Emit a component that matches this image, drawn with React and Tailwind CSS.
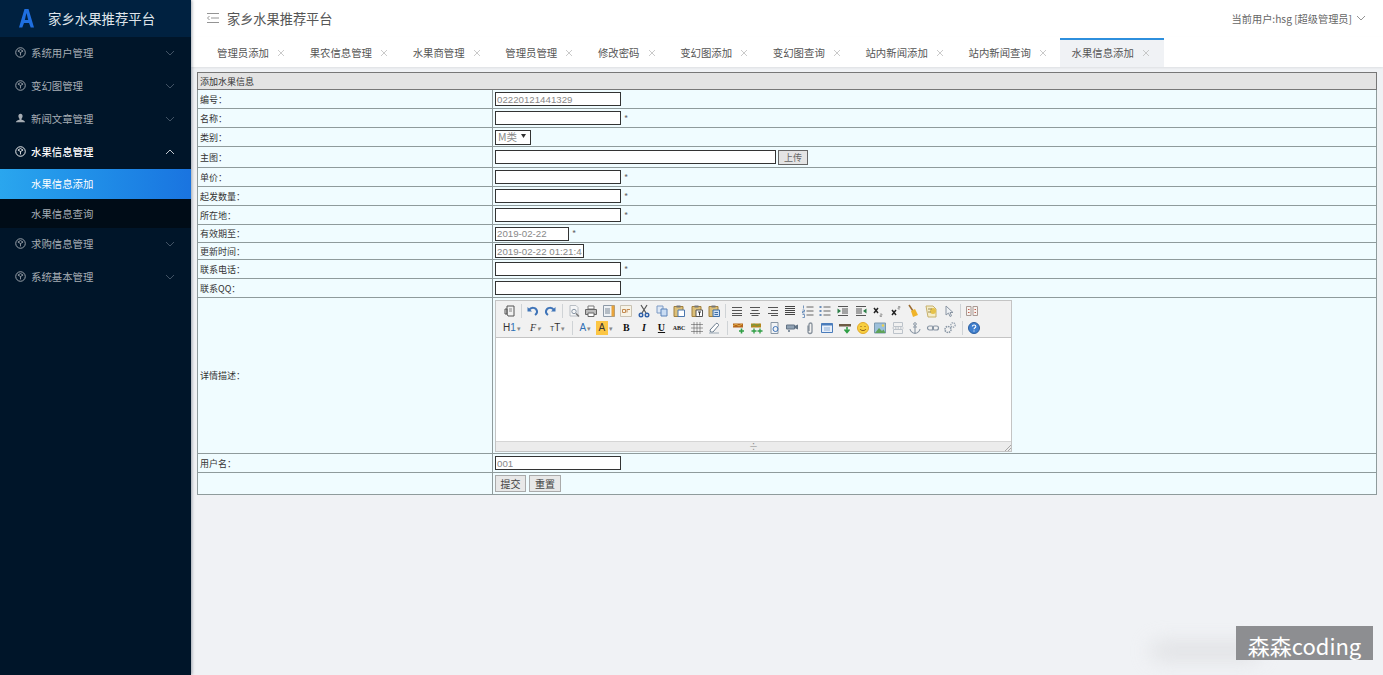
import React from "react";

const cjk = '"Noto Sans CJK SC","Liberation Sans",sans-serif';

function Cube({ c = "#a6adb4" }) {
  return (
    <svg width="11" height="11" viewBox="0 0 12 12" fill="none" stroke={c} strokeWidth="1" className="shrink-0">
      <circle cx="6" cy="6" r="5.2" />
      <path d="M3.200 4.400 6 2.800l2.800 1.600L6 6zM6 6v3.200" strokeWidth="0.9" />
    </svg>
  );
}
function UserI({ c = "#a6adb4" }) {
  return (
    <svg width="11" height="11" viewBox="0 0 12 12" fill={c} className="shrink-0">
      <path d="M6 .8c1.500 0 2.300 1.100 2.300 2.600 0 1.200-.6 2.300-1.200 2.900v1c1.300.5 3.700.9 3.900 2.700H.9c.3-1.800 2.600-2.200 4-2.700v-1c-.6-.6-1.200-1.700-1.200-2.900C3.700 1.900 4.500.8 6 .8z" />
    </svg>
  );
}
function Chev({ up, c = "#5f6f7f" }) {
  return (
    <svg width="10" height="6" viewBox="0 0 10 6" fill="none" stroke={c} strokeWidth="0.9">
      <path d={up ? "M1 5 5 1l4 4" : "M1 1l4 4 4-4"} />
    </svg>
  );
}
function Menu({ label, active, user }) {
  const c = active ? "#fff" : "#a6adb4";
  return (
    <div className={`h-[33px] flex items-center pb-[2px] pl-[15px] pr-[16px] ${active ? "text-white font-medium" : "text-[#a6adb4]"}`}>
      {user ? <UserI c={c} /> : <Cube c={c} />}
      <span className="ml-[5px] flex-1 text-[10.4px]">{label}</span>
      <Chev up={active} c={active ? "#d8dde2" : "#4a5a6c"} />
    </div>
  );
}

const tabs = ["管理员添加", "果农信息管理", "水果商管理", "管理员管理", "修改密码", "变幻图添加", "变幻图查询", "站内新闻添加", "站内新闻查询", "水果信息添加"];

function Tab({ label, active }) {
  return (
    <div className={`h-[29px] flex items-center pb-[2px] pl-[12px] text-[10.4px] border-t-2 ${active ? "border-[#2d8fdd] bg-[#f0f2f5] pr-[14px]" : "border-transparent pr-[12.7px]"}`}>
      <span className="text-[#555]">{label}</span>
      <svg width="8" height="8" viewBox="0 0 8 8" stroke="#bdbdbd" strokeWidth="0.8" className="ml-[8px]">
        <path d="M1 1l6 6M7 1 1 7" />
      </svg>
    </div>
  );
}

const S = ({ children }) => (
  <svg width="14" height="14" viewBox="0 0 14 14" fill="none" strokeWidth="1">{children}</svg>
);
const lines = (ys, x1 = 2, x2 = 12, c = "#555") => ys.map((y, i) => <path key={i} d={`M${x1} ${y}H${x2}`} stroke={c} />);

const I = {
  source: <S><path d="M4 2h7v10H5l-1-2zM2 5h2v5H2z" stroke="#555" /><path d="M6 5h3M6 7h3" stroke="#888" /></S>,
  undo: <S><path d="M3 6c2-3 7-3 8 1 .3 1.500-.5 3-2 4" stroke="#3f74b8" strokeWidth="2" /><path d="M1.500 3v4.500H6z" fill="#3f74b8" /></S>,
  redo: <S><path d="M11 6C9 3 4 3 3 7c-.3 1.500.5 3 2 4" stroke="#3f74b8" strokeWidth="2" /><path d="M12.500 3v4.500H8z" fill="#3f74b8" /></S>,
  preview: <S><path d="M3 1.500h6l2 2V12H3z" stroke="#b9bec4" fill="#f5f6f7" /><circle cx="7" cy="7.500" r="2.200" stroke="#8a97a6" /><path d="M9 9.500l3 3" stroke="#777" strokeWidth="1.500" /></S>,
  print: <S><path d="M4 2h6v3H4z" stroke="#777" fill="#fff" /><path d="M1.500 5.500h11v5h-11z" stroke="#666" fill="#bbb" /><path d="M4 9h6v3.500H4z" stroke="#666" fill="#fff" /></S>,
  tpl: <S><path d="M1.500 1.500h11v11h-11z" stroke="#8d99a6" fill="#eef2f6" /><path d="M9.500 1.500h3v11h-3z" fill="#e8a33a" /><path d="M3 5h5M3 7h5M3 9h5" stroke="#7a8794" /></S>,
  cf: <S><path d="M1.500 1.500h11v11h-11z" stroke="#c9c2b2" fill="#f7f3e6" /><path d="M3.500 5.500h3v3h-3zM8 5.500h3M8 5.500v3" stroke="#c48a50" /></S>,
  cut: <S><path d="M4 1l5 8M10 1 5 9" stroke="#555" strokeWidth="1.200" /><circle cx="4" cy="11" r="1.800" stroke="#2f5fa8" strokeWidth="1.400" /><circle cx="10" cy="11" r="1.800" stroke="#2f5fa8" strokeWidth="1.400" /></S>,
  copy: <S><path d="M2 2h6v7H2z" stroke="#7d9ac4" fill="#dfe9f6" /><path d="M6 5h6v7H6z" stroke="#5b82b8" fill="#c9dcf3" /></S>,
  paste: <S><path d="M2 2.500h9v10H2z" stroke="#a07f3d" fill="#dcbf78" /><path d="M4.500 1.500h4v2h-4z" fill="#777" /><path d="M6 6h6.500v6.500H6z" stroke="#4b76ad" fill="#fff" /></S>,
  paste2: <S><path d="M2 2.500h9v10H2z" stroke="#a07f3d" fill="#dcbf78" /><path d="M4.500 1.500h4v2h-4z" fill="#777" /><path d="M6 6h6.500v6.500H6z" stroke="#555" fill="#fff" /><path d="M8 8h3M9.500 8v3.500" stroke="#333" /></S>,
  paste3: <S><path d="M2 2.500h9v10H2z" stroke="#a07f3d" fill="#dcbf78" /><path d="M4.500 1.500h4v2h-4z" fill="#777" /><path d="M6 6h6.500v6.500H6z" stroke="#3c6ea8" fill="#cfe0f4" /><path d="M7.500 8.500h3.500M7.500 10.500h3.500" stroke="#3c6ea8" /></S>,
  al: <S>{lines([3.500, 6.500, 9.500, 11.500])}</S>,
  ac: <S>{lines([3.500, 9.500])}{lines([6.500, 11.500], 3.500, 10.500)}</S>,
  ar: <S>{lines([3.500, 9.500])}{lines([6.500, 11.500], 5, 12)}</S>,
  aj: <S>{lines([2.500, 4.500, 6.500, 8.500, 10.500], 2, 12, "#444")}</S>,
  ol: <S>{lines([3, 7, 11], 5.500, 12.500, "#666")}<path d="M2.500 1.500v3M1.500 6h2v1.500h-2V9h2M1.500 10.500h2v3h-2" stroke="#3f6ea8" strokeWidth="0.700" /></S>,
  ul: <S>{lines([3, 7, 11], 5.500, 12.500, "#666")}<path d="M1.500 3h2M1.500 7h2M1.500 11h2" stroke="#3f6ea8" strokeWidth="1.500" /></S>,
  ind: <S>{lines([2.500, 11.500], 2, 12)}{lines([5, 7, 9], 6, 12)}<path d="M1.500 4.500 5 7l-3.500 2.500z" fill="#2b7d46" /></S>,
  out: <S>{lines([2.500, 11.500], 2, 12)}{lines([5, 7, 9], 2, 8)}<path d="M12.500 4.500 9 7l3.500 2.500z" fill="#2b7d46" /></S>,
  sub: <S><path d="M3 4l4 5M7 4 3 9" stroke="#222" strokeWidth="1.500" /><path d="M9 10h2v1.200H9v1.300h2" stroke="#777" strokeWidth="0.600" /></S>,
  sup: <S><path d="M3 6l4 5M7 6l-4 5" stroke="#222" strokeWidth="1.500" /><path d="M9 2.500h2v1.200H9V5h2" stroke="#777" strokeWidth="0.600" /></S>,
  brush: <S><path d="M3 1l4 6" stroke="#9a6a2e" strokeWidth="1.500" /><path d="M5 7l4-2 3 6-5 2z" fill="#f0b429" /></S>,
  wizard: <S><path d="M2 2h7l3 3v8H4z" stroke="#c7b16c" fill="#f5edc8" /><circle cx="9" cy="7" r="3" fill="#e6c24a" /><path d="M4 5h4M4 8h3" stroke="#9a8c5c" /></S>,
  cursor: <S><path d="M4 2v9l2.500-2 1.500 3.500 1.500-.7L8 8.500h3z" stroke="#8a95a3" fill="#eef1f4" /></S>,
  full: <S><path d="M1.500 2.500h4.500v9H1.500zM8 2.500h4.500v9H8z" stroke="#a99a94" fill="#f7f2ee" /><path d="M3 5.500h1.500M3 8.500h1.500M9.500 5.500H11M9.500 8.500H11" stroke="#c05b4c" /></S>,
  eraser: <S><path d="M3 9l6-6.500c1-.8 3 .7 2.500 2L6 11H3.500z" stroke="#6b7c8d" fill="#fff" /><path d="M2 12h10" stroke="#9aa8b4" /></S>,
  grid: <S><path d="M1.500 3.500h11M1.500 7h11M1.500 10.500h11M4 1.500v11M7 1.500v11M10 1.500v11" stroke="#444" strokeDasharray="1 1" /></S>,
  imgAdd: <S><path d="M1 2.500h10v4H1z" fill="#b5651d" /><path d="M1 5l3-2 3 2 3-2" stroke="#e1b04a" /><path d="M9.500 7.500v5M7 10h5" stroke="#2e9e44" strokeWidth="1.600" /></S>,
  imgAdd2: <S><path d="M1 2.500h10v4H1z" fill="#b5861d" /><path d="M1 5l3-2 3 2 3-2" stroke="#65a04a" /><path d="M4 7.500v5M1.500 10h5M10 7.500v5M7.500 10h5" stroke="#2e9e44" strokeWidth="1.300" /></S>,
  doc: <S><path d="M3 1.500h7v11H3z" stroke="#8996a3" fill="#f1f3f5" /><circle cx="7.500" cy="8" r="2.500" stroke="#3f74b8" /></S>,
  video: <S><path d="M1.500 4h8v4h-8z" fill="#8fa1b3" stroke="#627385" /><path d="M9.500 5 13 3.500v5L9.500 7z" fill="#627385" /><circle cx="4" cy="10" r="1" fill="#627385" /></S>,
  clip: <S><path d="M5 4.500v6a2 2 0 0 0 4 0V3.500a1.500 1.500 0 0 0-3 0V10" stroke="#87919c" strokeWidth="1.300" /></S>,
  table: <S><path d="M1.500 2.500h11v9h-11z" stroke="#4a7cbb" fill="#e7effa" /><path d="M1.500 2.500h11v2h-11z" fill="#4a7cbb" /><path d="M4 7h6M4 9h6" stroke="#8fb0d8" /></S>,
  tdown: <S><path d="M1 3h12v2.500H1z" fill="#6d5b44" /><path d="M9 6v5M6.500 8.500 9 11.500l2.500-3" stroke="#2e9e44" strokeWidth="1.600" /></S>,
  smile: <S><circle cx="7" cy="7" r="5.500" fill="#f8cf3f" stroke="#e2a92b" /><path d="M4 8c1 2 5 2 6 0" stroke="#8a5a16" /><path d="M5 5v1M9 5v1" stroke="#8a5a16" /></S>,
  pic: <S><path d="M1.500 2h11v10h-11z" stroke="#7a98ae" fill="#9cc0db" /><path d="M2 12l4-5 3 3 1.500-1.500L12.500 12z" fill="#5fa35a" /><circle cx="10" cy="4.500" r="1.200" fill="#f0d24a" /></S>,
  page: <S><path d="M2.500 1.500h9v4h-9zM2.500 8.500h9v4h-9z" stroke="#bcc3ca" /><path d="M1.500 7h11" stroke="#aab2ba" strokeDasharray="1.500 1" /></S>,
  anchor: <S><circle cx="7" cy="3" r="1.300" stroke="#8a97a5" /><path d="M7 4v8.500M2 8c.5 3 3 4 5 4.500 2-.5 4.500-1.500 5-4.500M5 6h4" stroke="#8a97a5" strokeWidth="1.100" /></S>,
  link: <S><rect x="1.500" y="5" width="6" height="4" rx="2" stroke="#8794a3" strokeWidth="1.200" /><rect x="6.500" y="5" width="6" height="4" rx="2" stroke="#8794a3" strokeWidth="1.200" /></S>,
  gears: <S><circle cx="5" cy="8.500" r="3" stroke="#8a97a5" strokeWidth="1.600" strokeDasharray="1.500 .8" /><circle cx="10" cy="4" r="2.200" stroke="#98a4b1" strokeWidth="1.400" strokeDasharray="1.200 .8" /></S>,
  help: <S><circle cx="7" cy="7" r="5.500" fill="#3f7fce" stroke="#2c5e9f" /><path d="M5.300 5.500c.2-2 3.500-2 3.500 0 0 1.300-1.800 1.300-1.800 2.800M7 9.500v1" stroke="#fff" strokeWidth="1.100" /></S>,
};

const B = ({ k, w = 17.6 }) => (
  <div className="h-[16px] flex items-center justify-center shrink-0" style={{ width: w }}>{I[k]}</div>
);
const Sep = () => <div className="w-[5.5px] h-[14px] flex justify-center shrink-0"><div className="w-px h-full bg-[#cfd3d6]" /></div>;
const Drop = () => <span className="inline-block ml-[1px] text-[#888] text-[7px] leading-none">▾</span>;

function Toolbar() {
  const row1a = ["undo", "redo"];
  const row1b = ["preview", "print", "tpl", "cf", "cut", "copy", "paste", "paste2", "paste3"];
  const row1c = ["al", "ac", "ar", "aj", "ol", "ul", "ind", "out", "sub", "sup", "brush", "wizard", "cursor"];
  const row2a = ["imgAdd", "imgAdd2", "doc", "video", "clip", "table", "tdown", "smile", "pic", "page", "anchor", "link", "gears"];
  return (
    <div className="bg-[#f1f1f1] h-[37px] border-b border-[#c4c4c4] pt-[2px] pl-[5px] shrink-0">
      <div className="flex items-center h-[17px]">
        <B k="source" /><Sep />
        {row1a.map((k) => <B key={k} k={k} />)}<Sep />
        {row1b.map((k) => <B key={k} k={k} />)}<Sep />
        {row1c.map((k) => <B key={k} k={k} />)}<Sep />
        <B k="full" />
      </div>
      <div className="flex items-center h-[17px]">
        <div className="w-[23px] shrink-0 text-[10px] leading-none text-[#333] pl-[2px] font-['Liberation_Sans']">H<span className="text-[#2f6fb5]">1</span><Drop /></div>
        <div className="w-[23px] shrink-0 text-[10px] leading-none text-[#333] pl-[6px] italic font-['Liberation_Serif']">F<Drop /></div>
        <div className="w-[23px] shrink-0 text-[10px] leading-none text-[#333] pl-[3px] font-['Liberation_Sans']"><span className="text-[7px]">T</span>T<Drop /></div>
        <Sep />
        <div className="w-[20px] shrink-0 text-[10px] leading-none text-[#2f6fb5] pl-[4px] font-['Liberation_Sans']">A<Drop /></div>
        <div className="w-[22px] shrink-0 flex items-center text-[10px] leading-none font-['Liberation_Sans']"><span className="bg-[#fcc644] px-[3px] py-[2px] text-[#333]">A</span><Drop /></div>
        <div className="w-[17.6px] shrink-0 text-center text-[10px] leading-none font-bold font-['Liberation_Serif'] text-[#111]">B</div>
        <div className="w-[17.6px] shrink-0 text-center text-[10px] leading-none font-bold italic font-['Liberation_Serif'] text-[#111]">I</div>
        <div className="w-[17.6px] shrink-0 text-center text-[10px] leading-none font-bold underline font-['Liberation_Serif'] text-[#111]">U</div>
        <div className="w-[17.6px] shrink-0 text-center text-[6px] leading-none font-bold font-['Liberation_Serif'] text-[#222]">ABC</div>
        <B k="grid" /><B k="eraser" />
        <div className="w-[2px] shrink-0" /><Sep />
        {row2a.map((k, i) => <B key={i} k={k} />)}<Sep />
        <B k="help" />
      </div>
    </div>
  );
}

const field = "h-[14px] border border-[#333] bg-white px-[1px] text-[9.7px] text-[#888] font-['Liberation_Sans'] outline-none";
const Star = () => <span className="ml-[3px] text-[#666] text-[9px] leading-none">*</span>;

function Row({ h, label, children }) {
  return (
    <tr>
      <td className="border border-[#8f9b9c] pl-[2px] text-[9px] text-[#333] leading-none" style={{ height: h }}>{label}</td>
      <td className="border border-[#8f9b9c] pl-[2px] py-0 leading-none">
        <div className="flex items-center">{children}</div>
      </td>
    </tr>
  );
}

export default function App() {
  return (
    <div className="relative flex h-screen w-full overflow-hidden bg-[#f0f2f5]" style={{ fontFamily: cjk }}>
      <aside className="w-[191px] shrink-0 bg-[#001529] shadow-[1px_0_3px_rgba(0,21,41,0.35)] z-10">
        <div className="h-[37px] bg-[#002140] flex items-center pl-[19px]">
          <svg width="15" height="19" viewBox="0 0 15 19">
            <path d="M5.500 0h4L15 18.500h-3.300L10 14H5l-1.700 4.500H0z" fill="#1f6fe0" />
            <path d="M7.500 4 5.800 11h3.400z" fill="#002140" />
          </svg>
          <span className="ml-[14px] text-[13.4px] text-[#dfe4ea]">家乡水果推荐平台</span>
        </div>
        <Menu label="系统用户管理" />
        <Menu label="变幻图管理" />
        <Menu label="新闻文章管理" user />
        <Menu label="水果信息管理" active />
        <div className="h-[30px] pb-[1px] flex items-center pl-[31px] text-[10.4px] text-white bg-gradient-to-r from-[#2aa6ee] to-[#1a74e0]">水果信息添加</div>
        <div className="h-[29px] flex items-center pl-[31px] text-[10.4px] text-[#a6adb4] bg-[#000c17]">水果信息查询</div>
        <Menu label="求购信息管理" />
        <Menu label="系统基本管理" />
      </aside>

      <main className="flex-1 min-w-0 flex flex-col">
        <header className="h-[37px] bg-white flex items-center justify-between pl-[16px] pr-[17px]">
          <div className="flex items-center">
            <svg width="12" height="10" viewBox="0 0 12 10" fill="none" stroke="#888" strokeWidth="0.9">
              <path d="M0 .5h12M4 5h8M0 9.500h12M2.500 3 .5 5l2 2" />
            </svg>
            <span className="ml-[8px] text-[13.2px] text-[#555]">家乡水果推荐平台</span>
          </div>
          <div className="flex items-center text-[10.2px] text-[#666]">
            <span>当前用户:hsg [超级管理员]</span>
            <span className="ml-[4px]"><Chev c="#888" /></span>
          </div>
        </header>

        <nav className="h-[30px] bg-white flex pl-[14px] pt-[1px] shadow-[0_1px_2px_rgba(0,0,0,0.08)]">
          {tabs.map((t, i) => <Tab key={t} label={t} active={i === tabs.length - 1} />)}
        </nav>

        <div className="pt-[5px] pl-[6px] pr-[6px]">
          <table className="w-full border-collapse border border-[#4b5556] bg-[#f0fcff] table-fixed">
            <colgroup>
              <col className="w-[295px]" />
              <col />
            </colgroup>
            <tbody>
              <tr>
                <td colSpan={2} className="h-[17px] bg-[#e3e3e3] border border-[#777] pl-[2px] text-[9px] text-[#333] leading-none">添加水果信息</td>
              </tr>
              <Row h={19} label="编号："><input readOnly defaultValue="02220121441329" className={`${field} w-[126px]`} /></Row>
              <Row h={19} label="名称："><input className={`${field} w-[126px]`} /><Star /></Row>
              <Row h={19} label="类别：">
                <div className="relative w-[36px] h-[15px]">
                  <select className="block appearance-none w-full h-full border border-[#333] bg-white pl-[2px] text-[10.5px] leading-none text-[#888]" style={{ fontFamily: cjk }}>
                    <option>M类</option>
                  </select>
                  <svg width="5" height="4" viewBox="0 0 5 4" fill="#333" className="absolute right-[5px] top-[4px] pointer-events-none">
                    <path d="M0 0h5L2.500 4z" />
                  </svg>
                </div>
              </Row>
              <Row h={21} label="主图：">
                <input className={`${field} w-[281px]`} />
                <button className="ml-[2px] h-[15px] w-[30px] border border-[#666] bg-[#e4e4e4] text-[9px] text-[#666] leading-none">上传</button>
              </Row>
              <Row h={19} label="单价："><input className={`${field} w-[126px]`} /><Star /></Row>
              <Row h={19} label="起发数量："><input className={`${field} w-[126px]`} /><Star /></Row>
              <Row h={19} label="所在地："><input className={`${field} w-[126px]`} /><Star /></Row>
              <Row h={18} label="有效期至："><input readOnly defaultValue="2019-02-22" className={`${field} w-[74px]`} /><Star /></Row>
              <Row h={17} label="更新时间："><input readOnly defaultValue="2019-02-22 01:21:44" className={`${field} w-[89px]`} /></Row>
              <Row h={19} label="联系电话："><input className={`${field} w-[126px]`} /><Star /></Row>
              <Row h={19} label="联系QQ："><input className={`${field} w-[126px]`} /></Row>
              <Row h={156} label="详情描述：">
                <div className="w-[517px] h-[152px] border border-[#c4c4c4] bg-white flex flex-col">
                  <Toolbar />
                  <div className="flex-1" />
                  <div className="h-[10px] bg-[#ececec] border-t border-[#d5d5d5] relative flex items-center justify-center">
                    <span className="text-[#888] text-[9px] leading-none">÷</span>
                    <svg width="7" height="7" viewBox="0 0 7 7" stroke="#888" strokeWidth="0.7" className="absolute right-0 bottom-0">
                      <path d="M1 7l6-6M4 7l3-3" />
                    </svg>
                  </div>
                </div>
              </Row>
              <Row h={19} label="用户名："><input readOnly defaultValue="001" className={`${field} w-[126px]`} /></Row>
              <Row h={22} label="">
                <button className="h-[17px] w-[31px] border border-[#aaa] bg-[#e8e8e8] text-[10px] text-[#444] leading-none">提交</button>
                <button className="ml-[3px] h-[17px] w-[32px] border border-[#aaa] bg-[#e8e8e8] text-[10px] text-[#444] leading-none">重置</button>
              </Row>
            </tbody>
          </table>
        </div>
      </main>

      <div className="absolute left-[1150px] top-[642px] w-[110px] h-[18px] rounded-full bg-[#d9d9dc] blur-[10px] opacity-70" />
      <div className="absolute left-[1236px] top-[626px] w-[137px] h-[34px] bg-[#8d8e91] flex items-center justify-center pt-[4px] text-white text-[22px] leading-none">森森coding</div>
    </div>
  );
}
